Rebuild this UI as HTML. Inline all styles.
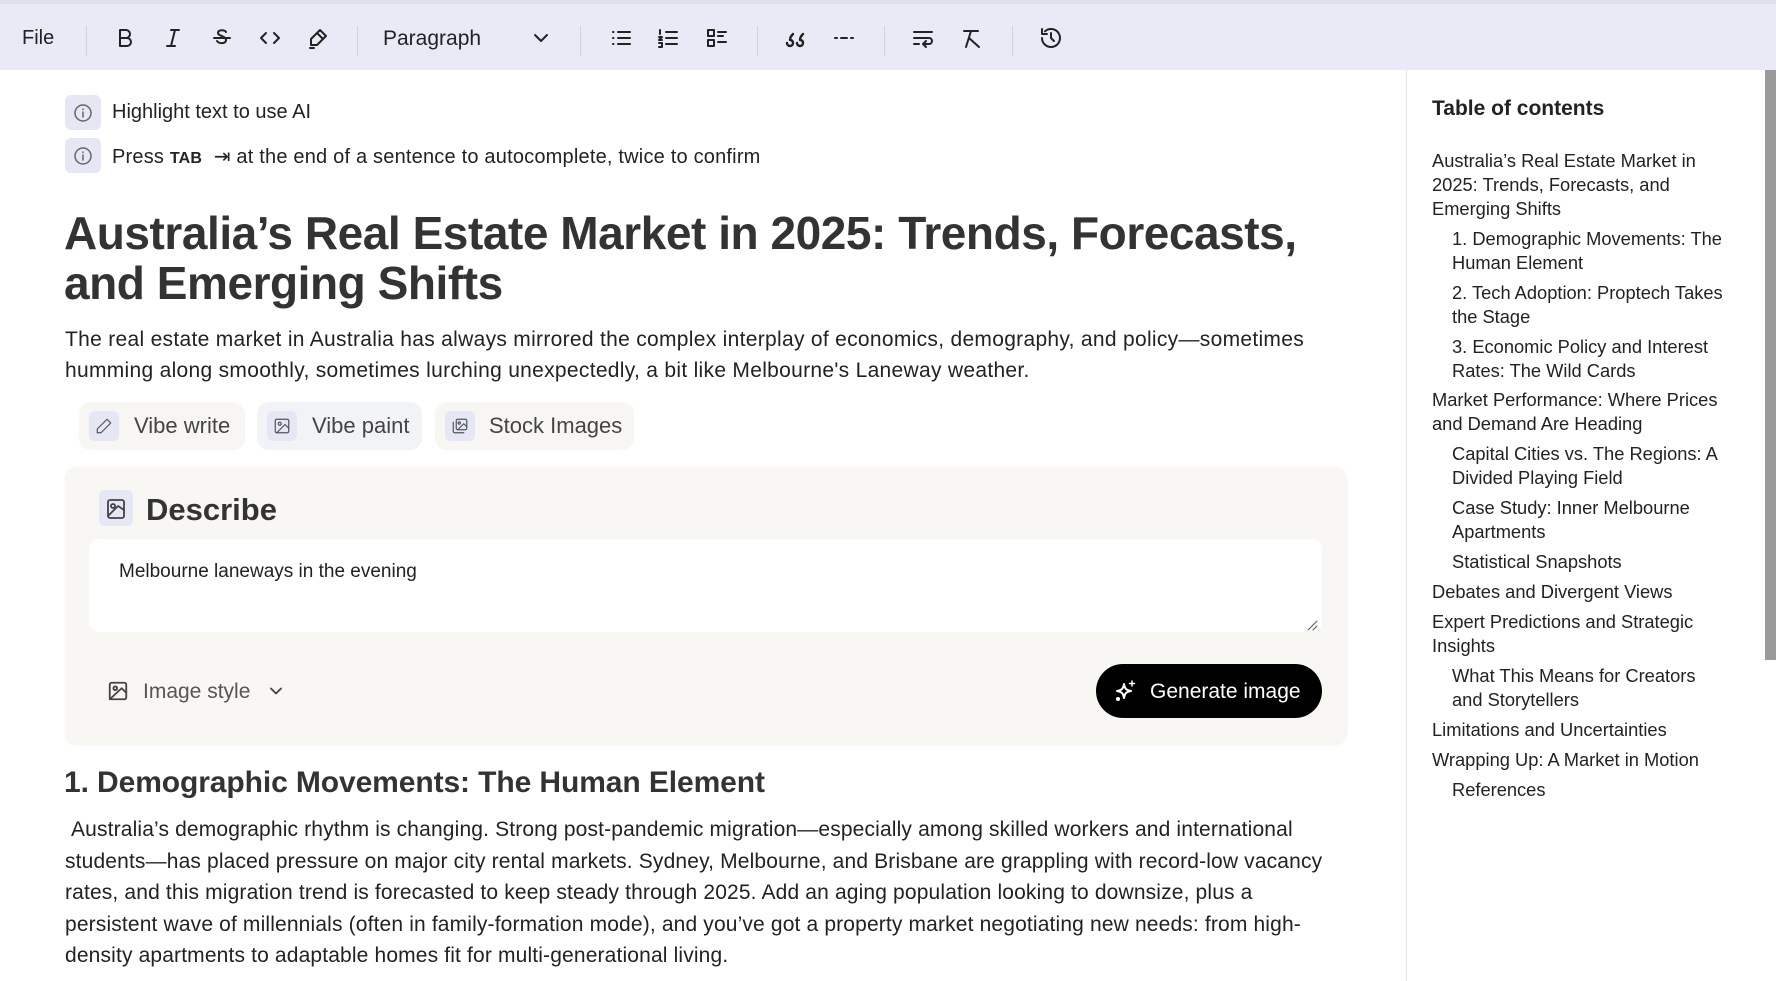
<!DOCTYPE html>
<html><head><meta charset="utf-8"><style>
*{box-sizing:border-box;margin:0;padding:0}
body{width:1776px;height:981px;overflow:hidden;background:#fff;font-family:"Liberation Sans",sans-serif;color:#222;position:relative}
.a{position:absolute;white-space:nowrap}
.tb{position:absolute;left:0;top:0;width:1776px;height:70px;background:#e9eaf6;border-top:4px solid #dfe1ef}
.div{position:absolute;top:22px;width:1px;height:30px;background:#cfd1e0}
.ic{position:absolute;top:22px;width:24px;height:24px}
svg{stroke:#222;fill:none;stroke-width:2;stroke-linecap:round;stroke-linejoin:round}
.ib{position:absolute;background:#e6e7f5;border-radius:6px}
.btn{position:absolute;top:402px;height:48px;background:#f7f6f3;border-radius:12px;font-size:22px;color:#444;line-height:48px}
.btn .ib{left:10px;top:9px;width:30px;height:30px}
.toc{position:absolute;left:1432px;font-size:18.3px;color:#222;line-height:24px}
.b{font-size:21px;letter-spacing:0.15px;color:#222;left:65px}
</style></head><body>
<div class="tb">
<div class="a" style="left:22px;top:23px;font-size:20px">File</div>
<div class="div" style="left:86px"></div>
<svg class="ic" style="left:113px" viewBox="0 0 24 24"><path d="M7 4h6a4 4 0 010 8H7zM7 12h7a4 4 0 010 8H7z"/></svg>
<svg class="ic" style="left:161px" viewBox="0 0 24 24"><path d="M10 4h8M6 20h8M14 4l-4 16"/></svg>
<svg class="ic" style="left:210px" viewBox="0 0 24 24"><path d="M4 12h16M16 6c-1-2-8-3-8 1 0 3 8 3 8 7 0 4-7 4-9 1"/></svg>
<svg class="ic" style="left:258px" viewBox="0 0 24 24"><path d="M8 7l-5 5 5 5M16 7l5 5-5 5"/></svg>
<svg class="ic" style="left:306px" viewBox="0 0 24 24"><path d="M14 4l6 6-9 9H5v-6zM11 7l6 6M4 22h4"/></svg>
<div class="div" style="left:357px"></div>
<div class="a" style="left:383px;top:23px;font-size:21px">Paragraph</div>
<svg class="ic" style="left:529px" viewBox="0 0 24 24"><path d="M6 9l6 6 6-6"/></svg>
<div class="div" style="left:580px"></div>
<svg class="ic" style="left:609px" viewBox="0 0 24 24"><path d="M9 6h12M9 12h12M9 18h12M4 6h.5M4 12h.5M4 18h.5"/></svg>
<svg class="ic" style="left:656px" viewBox="0 0 24 24"><path d="M10 6h11M10 12h11M10 18h11M4 4v4M3 11h3l-3 3h3M3 17h3v4H3"/></svg>
<svg class="ic" style="left:705px" viewBox="0 0 24 24"><rect x="3" y="4" width="6" height="6"/><rect x="3" y="14" width="6" height="6"/><path d="M13 6h8M13 10h5M13 16h8"/></svg>
<div class="div" style="left:757px"></div>
<svg class="ic" style="left:783px" viewBox="0 0 24 24"><path d="M4 17a3 3 0 106 0c0-3-3-3-3-3 0-3 2-5 3-6M14 17a3 3 0 106 0c0-3-3-3-3-3 0-3 2-5 3-6" stroke-width="2.4"/></svg>
<svg class="ic" style="left:832px" viewBox="0 0 24 24"><path d="M3 12h2M9 12h6M19 12h2"/></svg>
<div class="div" style="left:884px"></div>
<svg class="ic" style="left:911px" viewBox="0 0 24 24"><path d="M3 6h18M3 12h15a3 3 0 010 6h-5M15 15l-3 3 3 3M3 18h5"/></svg>
<svg class="ic" style="left:960px" viewBox="0 0 24 24"><path d="M4 5h14M11 5l-5 16M9 12l10 9"/></svg>
<div class="div" style="left:1012px"></div>
<svg class="ic" style="left:1039px" viewBox="0 0 24 24"><path d="M3 12a9 9 0 103-6.7M3 3v5h5M12 7v5l3 3"/></svg>
</div>
<div style="position:absolute;left:1406px;top:70px;width:1px;height:911px;background:#dde3f0"></div>
<div style="position:absolute;left:1765px;top:70px;width:11px;height:590px;background:#9a9a9a"></div>

<div class="ib" style="left:65px;top:95px;width:36px;height:35px"></div>
<svg style="position:absolute;left:73px;top:103px;stroke:#666;stroke-width:1.5" width="20" height="20" viewBox="0 0 20 20"><circle cx="10" cy="10" r="8"/><path d="M10 9v5M10 6v.5"/></svg>
<div class="a" style="left:112px;top:101px;font-size:20px">Highlight text to use AI</div>
<div class="ib" style="left:65px;top:138px;width:36px;height:35px"></div>
<svg style="position:absolute;left:73px;top:146px;stroke:#666;stroke-width:1.5" width="20" height="20" viewBox="0 0 20 20"><circle cx="10" cy="10" r="8"/><path d="M10 9v5M10 6v.5"/></svg>
<div class="a" style="left:112px;top:144px;font-size:20px;letter-spacing:0.2px">Press <b style="font-size:16px">TAB</b> &nbsp;⇥ at the end of a sentence to autocomplete, twice to confirm</div>

<div class="a" style="left:64px;top:208px;font-size:46px;font-weight:bold;line-height:50px;color:#333;letter-spacing:-0.45px">Australia’s Real Estate Market in 2025: Trends, Forecasts,<br>and Emerging Shifts</div>
<div class="a b" style="top:324px;line-height:31px;font-size:21px;letter-spacing:0.3px">The real estate market in Australia has always mirrored the complex interplay of economics, demography, and policy—sometimes<br>humming along smoothly, sometimes lurching unexpectedly, a bit like Melbourne's Laneway weather.</div>

<div class="btn" style="left:79px;width:166px"><div class="ib"></div><svg style="position:absolute;left:16px;top:15px;stroke:#555;stroke-width:1.6" width="18" height="18" viewBox="0 0 24 24"><path d="M16 3l5 5L8 21H3v-5z"/></svg><span style="position:absolute;left:55px">Vibe write</span></div>
<div class="btn" style="left:257px;width:165px;background:#f2f3f7"><div class="ib"></div><svg style="position:absolute;left:16px;top:15px;stroke:#555;stroke-width:1.6" width="18" height="18" viewBox="0 0 24 24"><rect x="3" y="3" width="18" height="18" rx="2"/><circle cx="9" cy="9" r="2"/><path d="M21 15l-5-5L5 21"/></svg><span style="position:absolute;left:55px">Vibe paint</span></div>
<div class="btn" style="left:435px;width:199px"><div class="ib"></div><svg style="position:absolute;left:16px;top:15px;stroke:#555;stroke-width:1.6" width="18" height="18" viewBox="0 0 24 24"><rect x="7" y="3" width="14" height="14" rx="2"/><path d="M3 7v12a2 2 0 002 2h12M21 13l-4-4-8 8"/><circle cx="11" cy="8" r="1.5"/></svg><span style="position:absolute;left:54px">Stock Images</span></div>

<div style="position:absolute;left:65px;top:467px;width:1282px;height:277px;background:#f8f7f4;border-radius:12px;box-shadow:0 1px 2px rgba(0,0,0,.06)"></div>
<div class="ib" style="left:99px;top:490px;width:34px;height:36px"></div>
<svg style="position:absolute;left:104px;top:497px;stroke:#444;stroke-width:1.8" width="24" height="24" viewBox="0 0 24 24"><rect x="4" y="3" width="16" height="18" rx="2"/><circle cx="9" cy="9" r="2"/><path d="M20 13l-6-4L4 19"/></svg>
<div class="a" style="left:146px;top:492px;font-size:31px;font-weight:bold;color:#333">Describe</div>
<div style="position:absolute;left:89px;top:539px;width:1233px;height:93px;background:#fff;border-radius:10px"></div>
<div class="a" style="left:119px;top:561px;font-size:19px">Melbourne laneways in the evening</div>
<svg style="position:absolute;left:1306px;top:619px;stroke:#666;stroke-width:1.2" width="12" height="12" viewBox="0 0 12 12"><path d="M2 11L11 2M7 11l4-4"/></svg>
<svg style="position:absolute;left:107px;top:680px;stroke:#444;stroke-width:2" width="22" height="22" viewBox="0 0 24 24"><rect x="3" y="3" width="18" height="18" rx="2"/><circle cx="9" cy="9" r="2"/><path d="M21 14l-5-5L3 21"/></svg>
<div class="a" style="left:143px;top:680px;font-size:21px;color:#555">Image style</div>
<svg style="position:absolute;left:266px;top:681px;stroke:#444;stroke-width:2.2" width="20" height="20" viewBox="0 0 24 24"><path d="M6 9l6 6 6-6"/></svg>
<div style="position:absolute;left:1096px;top:664px;width:226px;height:54px;background:#000;border-radius:27px"></div>
<svg style="position:absolute;left:1114px;top:679px;stroke:#fff;fill:#fff;stroke-width:1.5" width="24" height="24" viewBox="0 0 24 24"><path d="M10 5c1 5 2 6 7 7-5 1-6 2-7 7-1-5-2-6-7-7 5-1 6-2 7-7z" fill="none" stroke-width="2"/><path d="M18 2v5M15.5 4.5h5"/><circle cx="4" cy="20" r="1.3"/></svg>
<div class="a" style="left:1150px;top:680px;font-size:21px;color:#fff">Generate image</div>

<div class="a" style="left:64px;top:766px;font-size:30px;font-weight:bold;color:#333;letter-spacing:-0.1px">1. Demographic Movements: The Human Element</div>
<div class="a b" style="top:814px;line-height:31.6px"> &nbsp;Australia’s demographic rhythm is changing. Strong post-pandemic migration—especially among skilled workers and international<br>students—has placed pressure on major city rental markets. Sydney, Melbourne, and Brisbane are grappling with record-low vacancy<br>rates, and this migration trend is forecasted to keep steady through 2025. Add an aging population looking to downsize, plus a<br>persistent wave of millennials (often in family-formation mode), and you’ve got a property market negotiating new needs: from high-<br>density apartments to adaptable homes fit for multi-generational living.</div>

<div class="a" style="left:1432px;top:97px;font-size:21px;font-weight:bold">Table of contents</div>
<div class="toc" style="top:149px">Australia’s Real Estate Market in<br>2025: Trends, Forecasts, and<br>Emerging Shifts</div>
<div class="toc" style="top:227px;left:1452px">1. Demographic Movements: The<br>Human Element</div>
<div class="toc" style="top:281px;left:1452px">2. Tech Adoption: Proptech Takes<br>the Stage</div>
<div class="toc" style="top:335px;left:1452px">3. Economic Policy and Interest<br>Rates: The Wild Cards</div>
<div class="toc" style="top:388px">Market Performance: Where Prices<br>and Demand Are Heading</div>
<div class="toc" style="top:442px;left:1452px">Capital Cities vs. The Regions: A<br>Divided Playing Field</div>
<div class="toc" style="top:496px;left:1452px">Case Study: Inner Melbourne<br>Apartments</div>
<div class="toc" style="top:550px;left:1452px">Statistical Snapshots</div>
<div class="toc" style="top:580px">Debates and Divergent Views</div>
<div class="toc" style="top:610px">Expert Predictions and Strategic<br>Insights</div>
<div class="toc" style="top:664px;left:1452px">What This Means for Creators<br>and Storytellers</div>
<div class="toc" style="top:718px">Limitations and Uncertainties</div>
<div class="toc" style="top:748px">Wrapping Up: A Market in Motion</div>
<div class="toc" style="top:778px;left:1452px">References</div>
</body></html>
